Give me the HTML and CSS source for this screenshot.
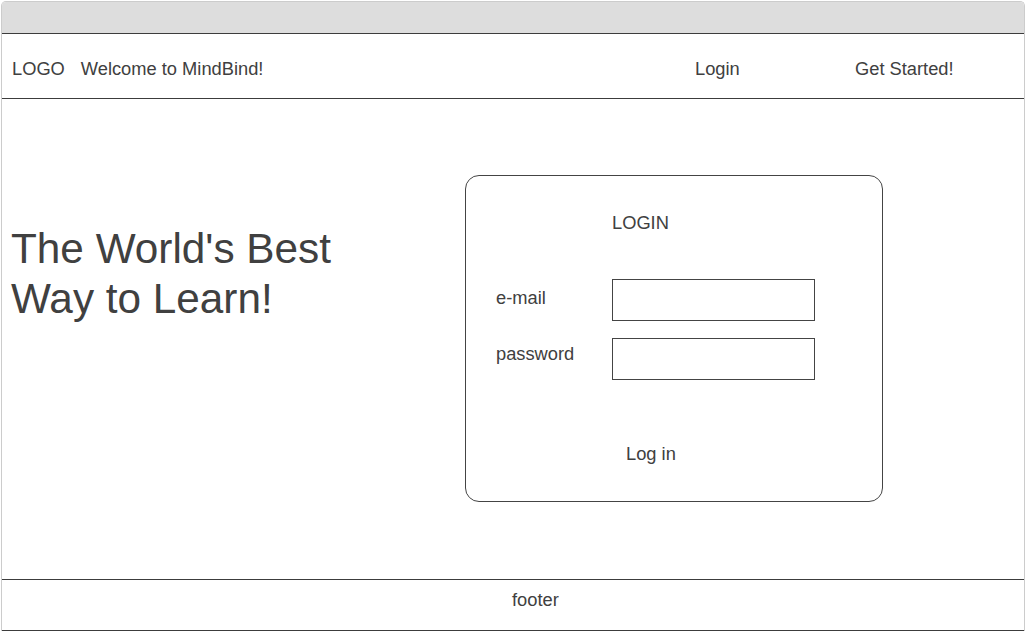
FILE: index.html
```html
<!DOCTYPE html>
<html lang="en">
<head>
<meta charset="utf-8">
<title>MindBind</title>
<link rel="stylesheet" href="styles.css">
</head>
<body>
<div class="window">
  <div class="titlebar"></div>
  <header class="header">
    <span class="brand">LOGO</span>
    <span class="welcome">Welcome to MindBind!</span>
    <nav class="nav">
      <a class="nav-link" href="#">Login</a>
      <a class="nav-link" href="#">Get Started!</a>
    </nav>
  </header>
  <main class="main">
    <section class="hero">
      <h1 class="hero-title">The World's Best<br>Way to Learn!</h1>
    </section>
    <form class="card">
      <div class="card-title">LOGIN</div>
      <div class="field field-email">
        <label class="label label-email" for="email">e-mail</label>
        <input class="input" id="email" type="text">
      </div>
      <div class="field field-password">
        <label class="label label-password" for="pw">password</label>
        <input class="input" id="pw" type="password">
      </div>
      <button class="submit" type="button">Log in</button>
    </form>
  </main>
  <footer class="footer">footer</footer>
</div>
</body>
</html>
```

FILE: styles.css
```css
* { box-sizing: border-box; }

html, body {
  margin: 0;
  padding: 0;
  background: #ffffff;
}

body {
  font-family: "Liberation Sans", Arial, sans-serif;
  font-size: 18.3px;
  color: #404040;
}

.window {
  margin: 1px 0 0 1px;
  width: 1024px;
  height: 630px;
  border: 1px solid #cccccc;
  border-bottom: none;
  border-radius: 5px 5px 0 0;
  display: flex;
  flex-direction: column;
  overflow: hidden;
}

.titlebar {
  height: 31px;
  background: #dddddd;
  flex: none;
}

.header {
  flex: none;
  height: 66px;
  margin: 0 -1px;
  border: 1px solid #3c3c3c;
  display: flex;
  align-items: flex-start;
  padding: 25px 0 0 10px;
  line-height: 20px;
}

.welcome {
  margin-left: 16px;
}

.nav {
  margin-left: auto;
  display: flex;
  padding-right: 9px;
}

.nav-link {
  width: 160px;
  color: inherit;
  text-decoration: none;
}

.main {
  flex: 1;
  display: flex;
  align-items: flex-start;
}

.hero {
  width: 463px;
  padding: 125px 0 0 9px;
}

.hero-title {
  margin: 0;
  font-size: 42.3px;
  font-weight: normal;
  line-height: 50px;
}

.card {
  margin: 76px 0 0 0;
  width: 418px;
  height: 327px;
  border: 1px solid #444444;
  border-radius: 14px;
  padding: 37px 0 0 30px;
  display: flex;
  flex-direction: column;
  align-items: flex-start;
  line-height: 20px;
}

.card-title {
  margin-left: 116px;
}

.field {
  display: flex;
  align-items: flex-start;
}

.field-email {
  margin-top: 46px;
}

.field-password {
  margin-top: 17px;
}

.label {
  width: 116px;
}

.label-email { padding-top: 9px; }
.label-password { padding-top: 6px; }

.input {
  width: 203px;
  height: 42px;
  border: 1px solid #444444;
  border-radius: 0;
  background: #ffffff;
  margin: 0;
  padding: 0 6px;
  font: inherit;
}

.submit {
  margin: 64px 0 0 130px;
  padding: 0;
  border: none;
  background: none;
  font: inherit;
  color: inherit;
  line-height: 20px;
}

.footer {
  flex: none;
  height: 52px;
  margin: 0 -1px;
  border: 1px solid #3c3c3c;
  padding: 10px 0 0 510px;
  line-height: 20px;
}
```
